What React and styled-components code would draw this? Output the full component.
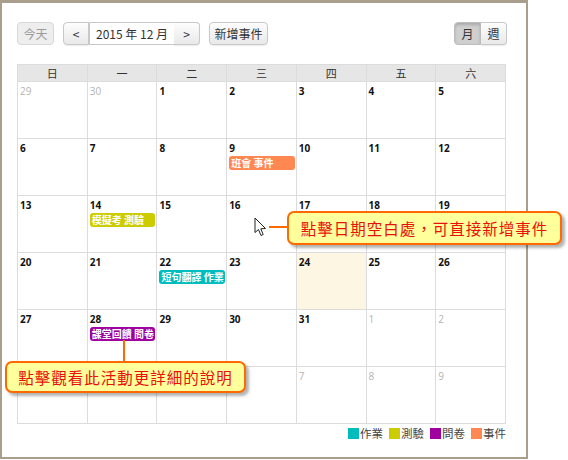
import React from "react";
import styled, { createGlobalStyle, css } from "styled-components";

const GlobalStyle = createGlobalStyle`
    html, body {
        margin: 0;
        padding: 0;
        background: #fff;
    }
    body {
        font-family: "Noto Sans CJK TC", "Noto Sans", sans-serif;
    }
`;

//palette
const COLORS = {
    homework: "#00bcbc",
    quiz: "#cccc00",
    survey: "#a000a0",
    event: "#ff8752",
};

//data
const WEEKDAYS = ["日", "一", "二", "三", "四", "五", "六"];

const WEEKS = [
    [29, 30, 1, 2, 3, 4, 5],
    [6, 7, 8, 9, 10, 11, 12],
    [13, 14, 15, 16, 17, 18, 19],
    [20, 21, 22, 23, 24, 25, 26],
    [27, 28, 29, 30, 31, 1, 2],
    [3, 4, 5, 6, 7, 8, 9],
];

const EVENTS = {
    "1-3": { title: "班會 事件", type: "event" },
    "2-1": { title: "模擬考 測驗", type: "quiz" },
    "3-2": { title: "短句翻譯 作業", type: "homework" },
    "4-1": { title: "課堂回饋 問卷", type: "survey" },
};

const LEGEND = [
    { label: "作業", type: "homework" },
    { label: "測驗", type: "quiz" },
    { label: "問卷", type: "survey" },
    { label: "事件", type: "event" },
];

//styled components
const Page = styled.div`
    position: relative;
    width: 568px;
    height: 460px;
`;

const Frame = styled.div`
    box-sizing: border-box;
    width: 528px;
    height: 459px;
    border-style: solid;
    border-color: #a99d8b;
    border-width: 3px 2px 2px 2px;
    padding: 19px 0 0 15px;
`;

const Toolbar = styled.div`
    display: flex;
    align-items: center;
    width: 490px;
    height: 23px;
`;

const Group = styled.div`
    display: flex;
    margin-left: ${props => props.gap || 0}px;
    ${props => props.right && css`margin-left: auto;`}
`;

const Button = styled.div`
    box-sizing: border-box;
    height: 23px;
    width: ${props => props.w}px;
    display: flex;
    align-items: center;
    justify-content: center;
    font-size: 12px;
    color: #333;
    border: 1px solid #c8c8c8;
    border-radius: 4px;
    background: linear-gradient(#fdfdfd, #e9e9e9);
    box-shadow: 0 1px 1px rgba(0, 0, 0, 0.08);
    ${props => props.first && css`border-radius: 4px 0 0 4px;`}
    ${props => props.last && css`border-radius: 0 4px 4px 0; border-left: none;`}
    ${props => props.disabled && css`
        color: #9a9a9a;
        background: #eeeeee;
        border-color: #d8d8d8;
        box-shadow: none;
    `}
    ${props => props.active && css`
        background: #cfcfcf;
        box-shadow: inset 0 2px 3px rgba(0, 0, 0, 0.18);
        border-color: #bdbdbd;
    `}
`;

const DateField = styled.div`
    box-sizing: border-box;
    height: 23px;
    width: 85px;
    display: flex;
    align-items: center;
    padding-left: 6px;
    font-size: 12px;
    color: #333;
    background: #fff;
    border-top: 1px solid #c8c8c8;
    border-bottom: 1px solid #c8c8c8;
    border-left: 1px solid #c8c8c8;
`;

const Grid = styled.div`
    box-sizing: border-box;
    margin-top: 19px;
    width: 489px;
    border-top: 1px solid #dcdcdc;
    border-left: 1px solid #dcdcdc;
`;

const Row = styled.div`
    display: grid;
    grid-template-columns: repeat(7, 1fr);
    height: ${props => props.h}px;
`;

const HeadCell = styled.div`
    box-sizing: border-box;
    display: flex;
    align-items: center;
    justify-content: center;
    background: #e6e6e6;
    border-right: 1px solid #dcdcdc;
    border-bottom: 1px solid #dcdcdc;
    font-size: 11px;
    color: #333;
`;

const DayCell = styled.div`
    box-sizing: border-box;
    border-right: 1px solid #dcdcdc;
    border-bottom: 1px solid #dcdcdc;
    background: ${props => props.today ? "#fcf6e2" : "#fff"};
    padding-top: 2px;
    min-width: 0;
`;

const DayNumber = styled.div`
    font-family: "Open Sans", "DejaVu Sans", sans-serif;
    font-size: 10px;
    font-weight: ${props => props.muted ? 400 : 700};
    color: ${props => props.muted ? "#b4b4b4" : "#111"};
    line-height: 14px;
    padding-left: 2px;
`;

const EventBar = styled.div`
    margin: 1px 1px 0 2px;
    height: 14px;
    border-radius: 3px;
    background: ${props => COLORS[props.type]};
    color: #fff;
    font-size: 10px;
    font-weight: 700;
    line-height: 14px;
    padding-left: 2px;
    white-space: nowrap;
    overflow: hidden;
`;

const Legend = styled.div`
    display: flex;
    justify-content: flex-end;
    width: 489px;
    margin-top: 3px;
    gap: 6px;
`;

const LegendItem = styled.div`
    display: flex;
    align-items: center;
    font-size: 11.5px;
    color: #444;
    line-height: 13px;
`;

const Swatch = styled.span`
    width: 11px;
    height: 11px;
    margin-right: 1px;
    background: ${props => COLORS[props.type]};
`;

//annotation overlays
const Callout = styled.div`
    position: absolute;
    box-sizing: border-box;
    left: ${props => props.x}px;
    top: ${props => props.y}px;
    width: ${props => props.w}px;
    height: ${props => props.h}px;
    display: flex;
    align-items: center;
    justify-content: center;
    background: #ffff9c;
    border: 2px solid #ff6a00;
    border-radius: 7px;
    box-shadow: 3px 3px 3px rgba(0, 0, 0, 0.3);
    color: #e8100a;
    font-size: 15.5px;
    letter-spacing: 1px;
`;

const Leader = styled.div`
    position: absolute;
    left: ${props => props.x}px;
    top: ${props => props.y}px;
    width: ${props => props.w}px;
    height: ${props => props.h}px;
    background: #ff6a00;
`;

const Pointer = styled.svg`
    position: absolute;
    left: 254px;
    top: 217px;
`;

//component
const App = () => {
    return (
        <Page>
            <GlobalStyle />
            <Frame>
                <Toolbar>
                    <Button w={37} disabled>今天</Button>
                    <Group gap={9}>
                        <Button w={26} first>&lt;</Button>
                        <DateField>2015 年 12 月</DateField>
                        <Button w={26} last>&gt;</Button>
                    </Group>
                    <Group gap={9}>
                        <Button w={59}>新增事件</Button>
                    </Group>
                    <Group right>
                        <Button w={27} first active>月</Button>
                        <Button w={26} last>週</Button>
                    </Group>
                </Toolbar>

                <Grid>
                    <Row h={17}>
                        {WEEKDAYS.map(day => <HeadCell key={day}>{day}</HeadCell>)}
                    </Row>
                    {WEEKS.map((week, w) => (
                        <Row h={57} key={w}>
                            {week.map((day, d) => {
                                const muted = (w === 0 && day > 20) || (w >= 4 && day < 10);
                                const event = EVENTS[`${w}-${d}`];
                                return (
                                    <DayCell key={d} today={w === 3 && day === 24}>
                                        <DayNumber muted={muted}>{day}</DayNumber>
                                        {event && <EventBar type={event.type}>{event.title}</EventBar>}
                                    </DayCell>
                                );
                            })}
                        </Row>
                    ))}
                </Grid>

                <Legend>
                    {LEGEND.map(item => (
                        <LegendItem key={item.type}>
                            <Swatch type={item.type} />
                            {item.label}
                        </LegendItem>
                    ))}
                </Legend>
            </Frame>

            <Pointer width="14" height="20" viewBox="0 0 14 20">
                <path d="M1 1 L1 15.5 L4.5 12.5 L7 18.5 L9.2 17.5 L6.8 11.8 L11.5 11.5 Z"
                    fill="#fff" stroke="#222" strokeWidth="1" strokeLinejoin="round" />
            </Pointer>
            <Leader x={269} y={226} w={19} h={2} />
            <Callout x={287} y={211} w={275} h={34}>點擊日期空白處，可直接新增事件</Callout>

            <Leader x={123} y={340} w={2} h={22} />
            <Callout x={5} y={361} w={241} h={32}>點擊觀看此活動更詳細的說明</Callout>
        </Page>
    );
};

export default App;
